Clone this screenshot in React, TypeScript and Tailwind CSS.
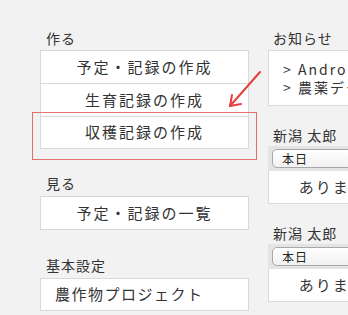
import React from 'react';

const jp = "font-['Noto_Sans_CJK_JP','Noto_Sans',sans-serif]";

function Label({ text }: { text: string }) {
  return <div className="h-[20px] pl-[6px] text-[14px] leading-[20px] tracking-[1px] text-[#333]">{text}</div>;
}

function UserBlock({ name }: { name: string }) {
  return (
    <div>
      <div className="h-[20px] pl-[5px] text-[14px] leading-[20px] tracking-[1px] text-[#333]">{name}</div>
      <div className="mt-[1px] bg-[#e4e4e4] px-[4px] py-[3px]">
        <div className="flex h-[19px] items-center rounded-[5px] border border-[#a8a8a8] bg-gradient-to-b from-white to-[#f1f1f1] pl-[9px] text-[12px] tracking-[1px] text-[#222]">
          本日
        </div>
      </div>
      <div className="flex h-[33px] items-center justify-center border-x border-b border-[#dadada] bg-white text-[15px] tracking-[2px] text-[#333]">
        ありません
      </div>
    </div>
  );
}

export default function App() {
  const makeItems = ['予定・記録の作成', '生育記録の作成', '収穫記録の作成'];
  return (
    <div className={`relative flex h-[315px] w-[348px] gap-[19px] overflow-hidden bg-[#f2f2f2] pl-[40px] pt-[28px] ${jp}`}>
      <div className="w-[209px] shrink-0">
        <Label text="作る" />
        <div className="mt-[2px] border border-[#d9d9d9] bg-white">
          {makeItems.map((t, i) => (
            <div
              key={t}
              className={`flex items-center justify-center text-[15px] tracking-[2px] text-[#333] ${i > 0 ? 'border-t border-[#d9d9d9]' : ''} ${i === 1 ? 'h-[33px]' : 'h-[32px]'}`}
            >
              {t}
            </div>
          ))}
        </div>

        <div className="mt-[24px]">
          <Label text="見る" />
        </div>
        <div className="mt-[3px] flex h-[34px] items-center justify-center border border-[#d9d9d9] bg-white text-[15px] tracking-[2px] text-[#333]">
          予定・記録の一覧
        </div>

        <div className="mt-[25px]">
          <Label text="基本設定" />
        </div>
        <div className="mt-[3px] flex h-[33px] items-center border border-[#d9d9d9] bg-white pl-[14px] text-[15px] tracking-[1.5px] text-[#333]">
          農作物プロジェクト
        </div>
      </div>

      <div className="w-[146px] shrink-0">
        <div className="h-[20px] pl-[5px] text-[14px] leading-[20px] tracking-[1px] text-[#333]">お知らせ</div>
        <div className="mt-[2px] h-[56px] overflow-hidden whitespace-nowrap border border-[#dadada] bg-white pl-[14px] pt-[9px] text-[14px] leading-[18px] tracking-[2px] text-[#333]">
          <div>&gt; Androidアプリ公開</div>
          <div>&gt; 農薬データ更新</div>
        </div>
        <div className="mt-[19px]">
          <UserBlock name="新潟 太郎" />
        </div>
        <div className="mt-[19px]">
          <UserBlock name="新潟 太郎" />
        </div>
      </div>

      <div className="absolute left-[32px] top-[112px] h-[48px] w-[225px] border-[1.5px] border-[#e07272]" />
      <svg className="absolute left-[222px] top-[66px]" width="44" height="48" viewBox="0 0 44 48">
        <g stroke="#e2403c" strokeWidth="2" fill="none" strokeLinecap="round">
          <line x1="38" y1="6" x2="8" y2="40" />
          <line x1="8" y1="40" x2="10" y2="29" />
          <line x1="8" y1="40" x2="19" y2="38" />
        </g>
      </svg>
    </div>
  );
}
